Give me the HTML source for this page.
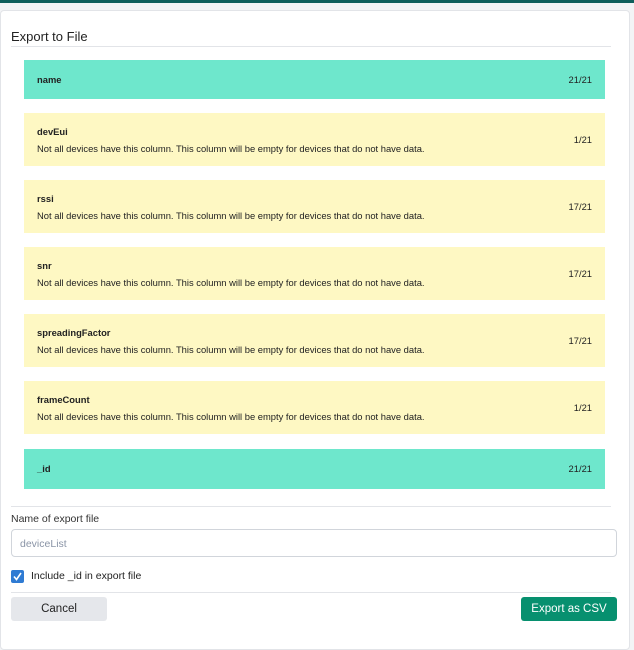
<!DOCTYPE html>
<html><head><style>
*{box-sizing:border-box;margin:0;padding:0}
body{width:634px;height:636px;background:#f3f4f6;font-family:"Liberation Sans",sans-serif;position:relative;overflow:hidden;color:#1f2937}
.top{position:absolute;left:0;top:0;width:634px;height:3px;background:#0f5f5c}
.card{position:absolute;left:0;top:10px;width:630px;height:640px;background:#fff;border:1px solid #e2e4e8;border-radius:4px}
.title{position:absolute;left:11px;top:29px;font-size:13px;color:#222}
.hr{position:absolute;left:11px;width:600px;height:1px;background:#e2e4e8}
.row{position:absolute;left:24px;width:581px;font-size:9.4px;color:#222}
.g{background:#6ee7cc}.y{background:#fef8c3}
.row b{position:absolute;left:13px;font-weight:bold}
.row .d{position:absolute;left:13px;top:30px}
.row .c{position:absolute;right:13px}
.lab{position:absolute;left:11px;top:513px;font-size:10.5px;color:#333}
.inp{position:absolute;left:11px;top:529px;width:606px;height:28px;border:1px solid #d1d5db;border-radius:4px;font-size:10.5px;color:#8a94a6;padding:8px 8px}
.cb{position:absolute;left:11px;top:570px;width:13px;height:13px;background:#2f7bd3;border-radius:2px}
.cbl{position:absolute;left:31px;top:570px;font-size:10.5px;color:#222}
.btn{position:absolute;top:597px;height:24px;border-radius:3px;font-size:11.5px;text-align:center;line-height:24px}
</style></head><body>
<div class="top"></div>
<div class="card"></div>
<div class="title">Export to File</div>
<div class="hr" style="top:46px"></div>
<div class="row g" style="top:60px;height:39px"><b style="top:14px">name</b><span class="c" style="top:14px">21/21</span></div>
<div class="row y" style="top:113px;height:53px"><b style="top:13px">devEui</b><span class="d">Not all devices have this column. This column will be empty for devices that do not have data.</span><span class="c" style="top:21px">1/21</span></div>
<div class="row y" style="top:180px;height:53px"><b style="top:13px">rssi</b><span class="d">Not all devices have this column. This column will be empty for devices that do not have data.</span><span class="c" style="top:21px">17/21</span></div>
<div class="row y" style="top:247px;height:53px"><b style="top:13px">snr</b><span class="d">Not all devices have this column. This column will be empty for devices that do not have data.</span><span class="c" style="top:21px">17/21</span></div>
<div class="row y" style="top:314px;height:53px"><b style="top:13px">spreadingFactor</b><span class="d">Not all devices have this column. This column will be empty for devices that do not have data.</span><span class="c" style="top:21px">17/21</span></div>
<div class="row y" style="top:381px;height:53px"><b style="top:13px">frameCount</b><span class="d">Not all devices have this column. This column will be empty for devices that do not have data.</span><span class="c" style="top:21px">1/21</span></div>
<div class="row g" style="top:449px;height:40px"><b style="top:14px">_id</b><span class="c" style="top:14px">21/21</span></div>
<div class="hr" style="top:506px"></div>
<div class="lab">Name of export file</div>
<div class="inp">deviceList</div>
<div class="cb"><svg width="13" height="13" viewBox="0 0 13 13"><path d="M3 6.5l2.5 3L10 3" stroke="#fff" stroke-width="1.6" fill="none"/></svg></div>
<div class="cbl">Include _id in export file</div>
<div class="hr" style="top:592px"></div>
<div class="btn" style="left:11px;width:96px;background:#e5e7eb;color:#222">Cancel</div>
<div class="btn" style="left:521px;width:96px;background:#07906f;color:#fff">Export as CSV</div>
</body></html>
